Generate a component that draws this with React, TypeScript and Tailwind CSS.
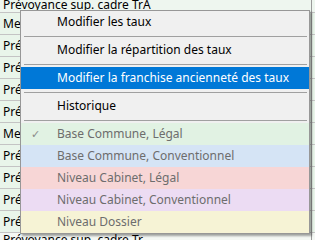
const rows = ["Mer", "Prév", "Prév", "Prév", "Prév", "Mer", "Prév", "Prév", "Prév", "Prév"];

const font = { fontFamily: '"Noto Sans", "Open Sans", sans-serif' };

function Sep() {
  return (
    <div className="h-[6px] flex items-center pl-[3px] pr-[2px]">
      <div className="h-px w-full bg-[#a0a0a0]" />
    </div>
  );
}

function Item({ label, active, bg, check }: { label: string; active?: boolean; bg?: string; check?: boolean }) {
  return (
    <div
      className={`h-[22px] flex items-center text-[12px] ${
        active ? "bg-[#0078d7] text-white" : bg ? "text-[#6d6d6d]" : "text-black"
      } ${bg ?? ""}`}
    >
      <span className="w-[36px] pl-[10px] text-[#8a8a8a] text-[11px]">{check ? "✓" : ""}</span>
      <span>{label}</span>
    </div>
  );
}

export default function App() {
  return (
    <div className="relative w-[315px] h-[240px] overflow-hidden bg-[#e9f5ea] text-[12px] text-black" style={font}>
      <div className="h-[13px] border-b border-[#c4c4c4] bg-[#eef6ef] pl-[3px] leading-[10px] overflow-hidden">
        Prévoyance sup. cadre TrA
      </div>
      {rows.map((r, i) => (
        <div key={i} className="h-[22px] border-b border-[#c4c4c4] flex items-center pl-[3px]">
          {r}
        </div>
      ))}
      <div className="h-[22px] pl-[3px] bg-[#f4f8f4] leading-[14px]">Prévoyance sup. cadre Tr</div>
      <div className="absolute top-0 bottom-0 left-[311px] w-px bg-[#9a9a9a]" />

      <div className="absolute left-[20px] top-[10px] w-[290px] border border-[#979797] bg-[#f0f0f0] shadow-[2px_2px_2px_rgba(0,0,0,0.35)]">
        <Item label="Modifier les taux" />
        <Sep />
        <Item label="Modifier la répartition des taux" />
        <Sep />
        <Item label="Modifier la franchise ancienneté des taux" active />
        <Sep />
        <Item label="Historique" />
        <Sep />
        <Item label="Base Commune, Légal" bg="bg-[#e1f2e3]" check />
        <Item label="Base Commune, Conventionnel" bg="bg-[#d5e4f5]" />
        <Item label="Niveau Cabinet, Légal" bg="bg-[#f7d6d6]" />
        <Item label="Niveau Cabinet, Conventionnel" bg="bg-[#ecdcf3]" />
        <Item label="Niveau Dossier" bg="bg-[#f6f3d5]" />
      </div>
    </div>
  );
}
